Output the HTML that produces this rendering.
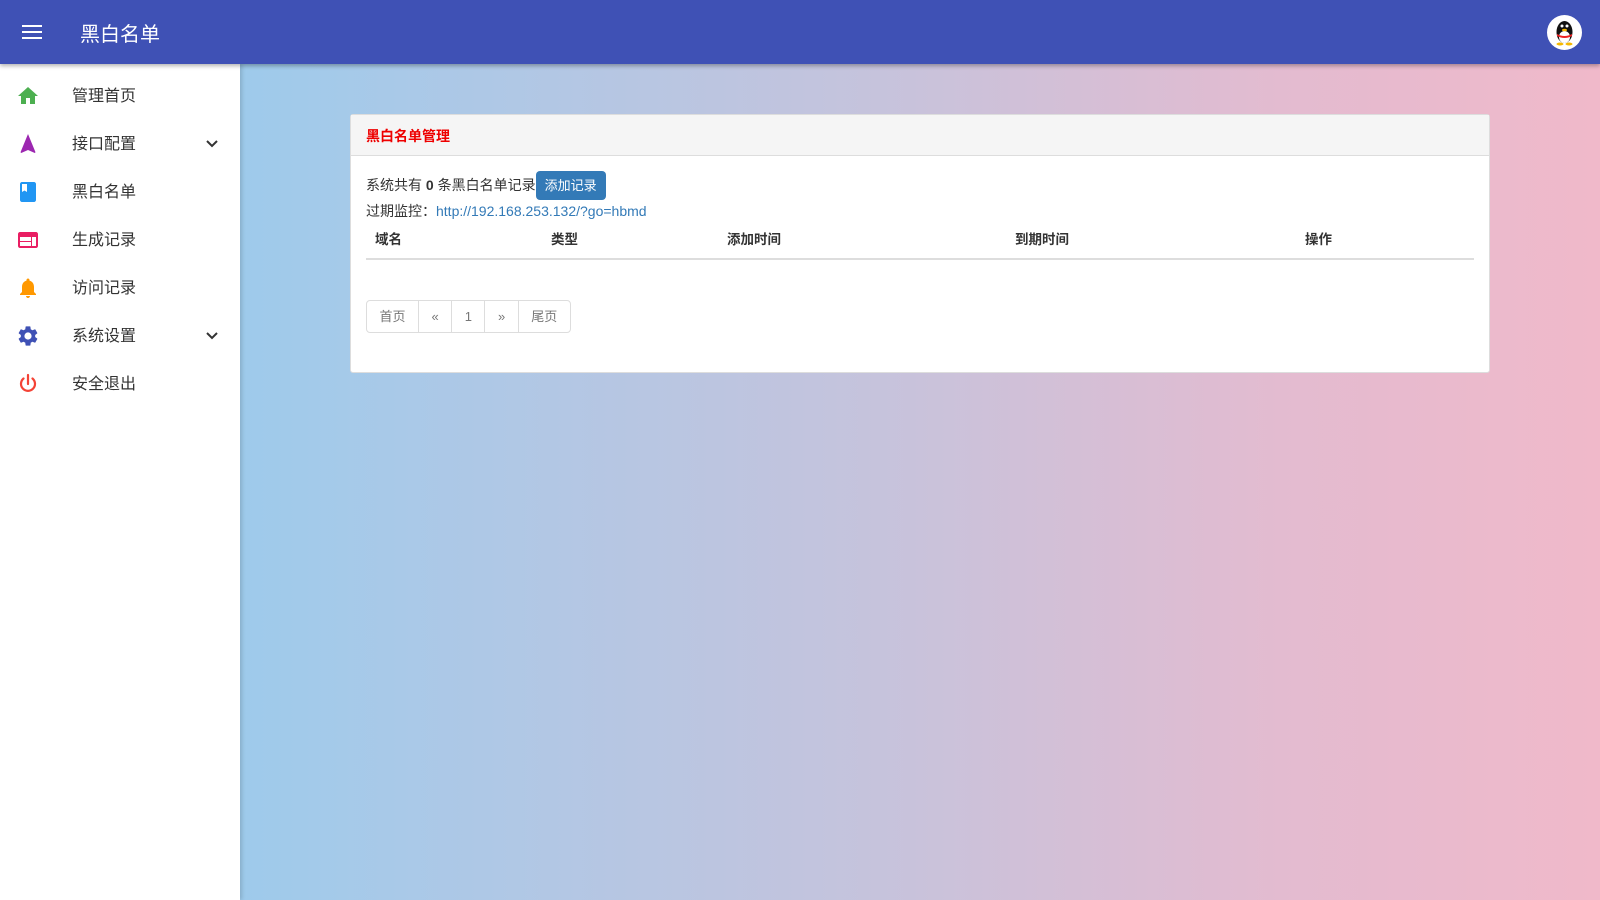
<!DOCTYPE html>
<html><head><meta charset="utf-8"><style>
*{margin:0;padding:0;box-sizing:border-box}
body{width:1600px;height:900px;overflow:hidden;font-family:"Liberation Sans","Noto Sans CJK SC",sans-serif;background:linear-gradient(90deg,#8dcdf0 0%,#a9c9e8 25%,#c6c3dc 55%,#e3bbd0 80%,#f0b9ca 100%);position:relative}
.top{position:absolute;left:0;top:0;width:1600px;height:64px;background:#3f51b5;box-shadow:0 2px 4px rgba(0,0,0,.3);z-index:2}
.ham{position:absolute;left:22px;top:25px;width:20px}
.ham i{display:block;height:2px;background:#fff;margin-bottom:4px}
.title{position:absolute;left:80px;top:18px;color:#fff;font-size:20px}
.av{position:absolute;left:1547px;top:15px;width:35px;height:35px;border-radius:50%;background:#fff}
.side{position:absolute;left:0;top:64px;width:240px;height:836px;background:#fff;box-shadow:2px 0 4px rgba(0,0,0,.15)}
.it{position:absolute;left:0;width:240px;height:48px;font-size:16px;color:#333}
.it span{position:absolute;left:72px;top:10px}
.it svg{position:absolute;left:16px;top:12px}
.card{position:absolute;left:350px;top:114px;width:1140px;height:259px;background:#fff;border-radius:3px;border:1px solid #ddd}
.ch{height:41px;background:#f5f5f5;border-bottom:1px solid #ddd;color:#e00;font-size:14px;font-weight:bold;padding:11px 15px}
.t1{position:absolute;left:15px;top:56px;font-size:14px;color:#333;line-height:29px;white-space:nowrap}
.btn{display:inline-block;vertical-align:top;width:70px;height:29px;background:#337ab7;color:#fff;border-radius:4px;font-size:13px;text-align:center;line-height:29px}
.t2{position:absolute;left:15px;top:86px;font-size:14px;color:#333}
.t2 a{color:#337ab7;text-decoration:none}
.th{position:absolute;top:113px;font-size:13.5px;font-weight:bold;color:#333}
.ln{position:absolute;left:15px;top:143px;width:1108px;height:2px;background:#ddd}
.pg{position:absolute;left:15px;top:185px;display:flex;border:1px solid #ddd;border-radius:4px;height:33px}
.pg div{padding:0 12.5px;line-height:31px;font-size:13px;color:#777;border-right:1px solid #ddd}
.pg div:last-child{border-right:0}
</style></head><body>
<div class="top"><div class="ham"><i></i><i></i><i></i></div><div class="title">黑白名单</div>
<div class="av"><svg width="35" height="35" viewBox="0 0 35 35"><ellipse cx="17.5" cy="17" rx="8" ry="11" fill="#111"/><ellipse cx="17.5" cy="22" rx="5.5" ry="6" fill="#fff"/><path d="M10 19 Q17.5 23 25 19 L25 21 Q17.5 25 10 21Z" fill="#e22"/><ellipse cx="17.5" cy="15" rx="2.5" ry="1.3" fill="#f5b800"/><circle cx="15" cy="11" r="1.5" fill="#fff"/><circle cx="20" cy="11" r="1.5" fill="#fff"/><ellipse cx="13" cy="29" rx="3.5" ry="1.5" fill="#f5b800"/><ellipse cx="22" cy="29" rx="3.5" ry="1.5" fill="#f5b800"/></svg></div></div>
<div class="side">
<div class="it" style="top:8px"><svg width="24" height="24" viewBox="0 0 24 24"><path d="M10 20v-6h4v6h5v-8h3L12 3 2 12h3v8z" fill="#4caf50"/></svg><span>管理首页</span></div>
<div class="it" style="top:56px"><svg width="24" height="24" viewBox="0 0 24 24"><path d="M12 2L4.5 20.3l.7.7L12 18l6.8 3 .7-.7z" fill="#9c27b0"/></svg><span>接口配置</span><svg width="14" height="14" viewBox="0 0 14 14" style="left:205px;top:17px"><path d="M2 4l5 5 5-5" stroke="#333" stroke-width="2" fill="none"/></svg></div>
<div class="it" style="top:104px"><svg width="24" height="24" viewBox="0 0 24 24"><path d="M18 2H6c-1.1 0-2 .9-2 2v16c0 1.1.9 2 2 2h12c1.1 0 2-.9 2-2V4c0-1.1-.9-2-2-2zM6 4h5v8l-2.5-1.5L6 12V4z" fill="#2196f3"/></svg><span>黑白名单</span></div>
<div class="it" style="top:152px"><svg width="24" height="24" viewBox="0 0 24 24"><path d="M20 4H4c-1.1 0-2 .9-2 2v12c0 1.1.9 2 2 2h16c1.1 0 2-.9 2-2V6c0-1.1-.9-2-2-2zm-5 14H4v-4h11v4zm0-5H4V9h11v4zm5 5h-4V9h4v9z" fill="#e91e63"/></svg><span>生成记录</span></div>
<div class="it" style="top:200px"><svg width="24" height="24" viewBox="0 0 24 24"><path d="M12 22c1.1 0 2-.9 2-2h-4c0 1.1.9 2 2 2zm6-6v-5c0-3.07-1.64-5.64-4.5-6.32V4c0-.83-.67-1.5-1.5-1.5s-1.5.67-1.5 1.5v.68C7.63 5.36 6 7.92 6 11v5l-2 2v1h16v-1l-2-2z" fill="#ff9800"/></svg><span>访问记录</span></div>
<div class="it" style="top:248px"><svg width="24" height="24" viewBox="0 0 24 24"><path d="M19.14 12.94c.04-.3.06-.61.06-.94s-.02-.64-.07-.94l2.03-1.58a.49.49 0 00.12-.61l-1.92-3.32a.49.49 0 00-.59-.22l-2.39.96c-.5-.38-1.03-.7-1.62-.94l-.36-2.54a.48.48 0 00-.48-.41h-3.84c-.24 0-.43.17-.47.41l-.36 2.54c-.59.24-1.13.57-1.62.94l-2.39-.96a.48.48 0 00-.59.22L2.74 8.87c-.12.21-.08.47.12.61l2.03 1.58c-.05.3-.09.63-.09.94s.02.64.07.94l-2.03 1.58a.49.49 0 00-.12.61l1.92 3.32c.12.22.37.29.59.22l2.39-.96c.5.38 1.03.7 1.62.94l.36 2.54c.05.24.24.41.48.41h3.84c.24 0 .44-.17.47-.41l.36-2.54c.59-.24 1.13-.56 1.62-.94l2.39.96c.22.08.47 0 .59-.22l1.92-3.32c.12-.22.07-.47-.12-.61zM12 15.6A3.6 3.6 0 1112 8.4a3.6 3.6 0 010 7.2z" fill="#3f51b5"/></svg><span>系统设置</span><svg width="14" height="14" viewBox="0 0 14 14" style="left:205px;top:17px"><path d="M2 4l5 5 5-5" stroke="#333" stroke-width="2" fill="none"/></svg></div>
<div class="it" style="top:296px"><svg width="24" height="24" viewBox="0 0 24 24"><path d="M12 3v9M7.5 6.5a7 7 0 109 0" stroke="#f44336" stroke-width="2.2" fill="none" stroke-linecap="round"/></svg><span>安全退出</span></div>
</div>
<div class="card"><div class="ch">黑白名单管理</div>
<div class="t1">系统共有 <b>0</b> 条黑白名单记录<span class="btn">添加记录</span></div>
<div class="t2">过期监控：<a>http://192.168.253.132/?go=hbmd</a></div>
<div class="th" style="left:24px">域名</div><div class="th" style="left:200px">类型</div><div class="th" style="left:376px">添加时间</div><div class="th" style="left:664px">到期时间</div><div class="th" style="left:954px">操作</div>
<div class="ln"></div>
<div class="pg"><div>首页</div><div>«</div><div>1</div><div>»</div><div>尾页</div></div>
</div>
</body></html>
